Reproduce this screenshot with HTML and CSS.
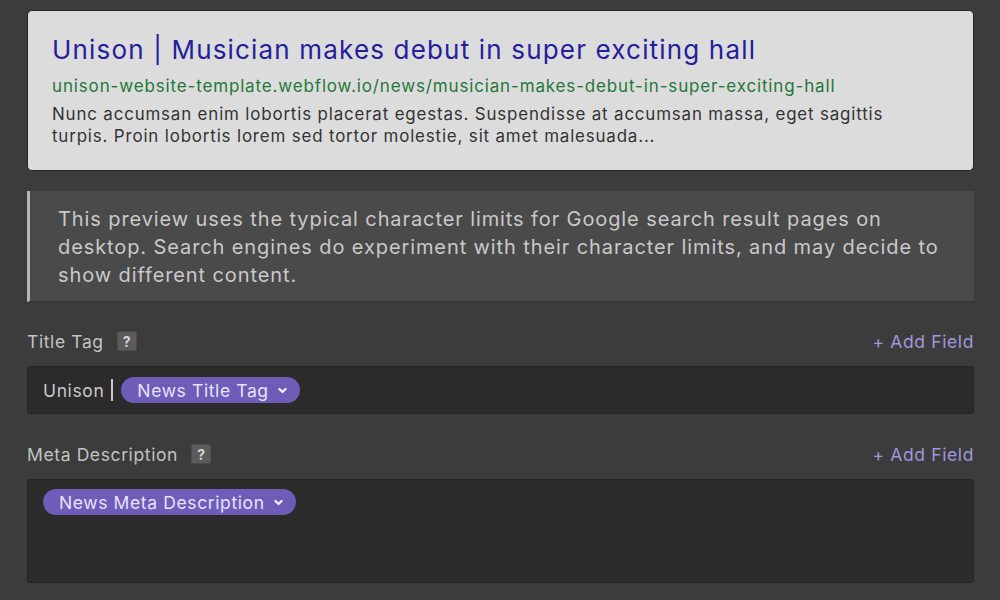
FILE: index.html
```html
<!DOCTYPE html>
<html lang="en">
<head>
    <meta charset="UTF-8">
    <title>SEO Settings</title>
    <link rel="stylesheet" href="styles.css">
</head>
<body>
    <div class="panel">
        <div class="serp-preview">
            <div class="serp-title">Unison | Musician makes debut in super exciting hall</div>
            <div class="serp-url">unison-website-template.webflow.io/news/musician-makes-debut-in-super-exciting-hall</div>
            <div class="serp-desc">Nunc accumsan enim lobortis placerat egestas. Suspendisse at accumsan massa, eget sagittis turpis. Proin lobortis lorem sed tortor molestie, sit amet malesuada...</div>
        </div>

        <div class="note">
            This preview uses the typical character limits for Google search result pages on desktop. Search engines do experiment with their character limits, and may decide to show different content.
        </div>

        <div class="field">
            <div class="field-head">
                <span class="field-label">Title Tag</span>
                <span class="help">?</span>
                <a class="add-field">+ Add Field</a>
            </div>
            <div class="field-input">
                <span class="plain">Unison</span>
                <span class="sep"></span>
                <span class="token">News Title Tag
                    <svg class="chev" viewBox="0 0 10 10" width="11" height="11"><path d="M2.2 3.6 L5 6.4 L7.8 3.6" fill="none" stroke="currentColor" stroke-width="2.1" stroke-linecap="round" stroke-linejoin="round"/></svg>
                </span>
            </div>
        </div>

        <div class="field">
            <div class="field-head">
                <span class="field-label">Meta Description</span>
                <span class="help">?</span>
                <a class="add-field">+ Add Field</a>
            </div>
            <div class="field-input tall">
                <span class="token">News Meta Description
                    <svg class="chev" viewBox="0 0 10 10" width="11" height="11"><path d="M2.2 3.6 L5 6.4 L7.8 3.6" fill="none" stroke="currentColor" stroke-width="2.1" stroke-linecap="round" stroke-linejoin="round"/></svg>
                </span>
            </div>
        </div>
    </div>
</body>
</html>
```

FILE: styles.css
```css
body {
    margin: 0;
    background-color: #3c3c3c;
    font-family: Inter, 'Noto Sans', sans-serif;
}

.panel {
    padding: 10px 26px 0 27px;
}

.serp-preview {
    background-color: #dcdcdc;
    border: 1px solid #262626;
    border-radius: 5px;
    padding: 22px 24px 23px 24px;
}

.serp-title {
    color: #24209c;
    font-size: 26px;
    line-height: 34px;
    letter-spacing: 0.045em;
}

.serp-url {
    color: #24773a;
    font-size: 17px;
    line-height: 24px;
    letter-spacing: 0.05em;
    margin-top: 7px;
}

/* the snippet keeps a wider right gutter than the title */
.serp-desc {
    color: #333333;
    font-size: 16.9px;
    line-height: 22px;
    letter-spacing: 0.05em;
    margin-top: 5px;
    padding-right: 50px;
}

.note {
    margin-top: 20px;
    background-color: #4a4a4a;
    border-left: 3px solid #b5b5b5;
    border-bottom: 1px solid #363636;
    color: #c9c9c9;
    font-size: 20px;
    line-height: 28px;
    letter-spacing: 0.045em;
    padding: 14px 20px 12px 28px;
}

.field {
    margin-top: 27px;
}

.field + .field {
    margin-top: 28px;
}

.field-head {
    display: flex;
    align-items: center;
    height: 24px;
    margin-bottom: 13px;
}

.field-label {
    color: #c2c2c2;
    font-size: 17.5px;
    letter-spacing: 0.035em;
}

.help {
    margin-left: 13px;
    width: 20px;
    height: 20px;
    background-color: #5b5b5b;
    border: 1px solid #4c4c4c;
    border-radius: 2px;
    box-sizing: border-box;
    color: #d6d6d6;
    font-size: 14px;
    font-weight: 700;
    display: flex;
    align-items: center;
    justify-content: center;
}

.add-field {
    margin-left: auto;
    color: #a195dd;
    font-size: 17.5px;
    letter-spacing: 0.035em;
}

.field-input {
    box-sizing: border-box;
    height: 48px;
    background-color: #2b2b2b;
    border: 1px solid #252525;
    border-radius: 3px;
    display: flex;
    align-items: center;
    padding: 0 15px;
}

.field-input.tall {
    align-items: flex-start;
    height: 104px;
    padding-top: 9px;
}

.plain {
    color: #c8c8c8;
    font-size: 17.5px;
    letter-spacing: 0.035em;
}

.sep {
    width: 2px;
    height: 22px;
    background-color: #c8c8c8;
    margin: 0 8px 0 7px;
}

.token {
    display: inline-flex;
    align-items: center;
    gap: 8px;
    height: 26px;
    padding: 0 12px 0 16px;
    border-radius: 13px;
    background-color: #6e5cb8;
    color: #e7e2fb;
    font-size: 17.5px;
    letter-spacing: 0.035em;
}

.chev {
    color: #eeeaff;
}
```
